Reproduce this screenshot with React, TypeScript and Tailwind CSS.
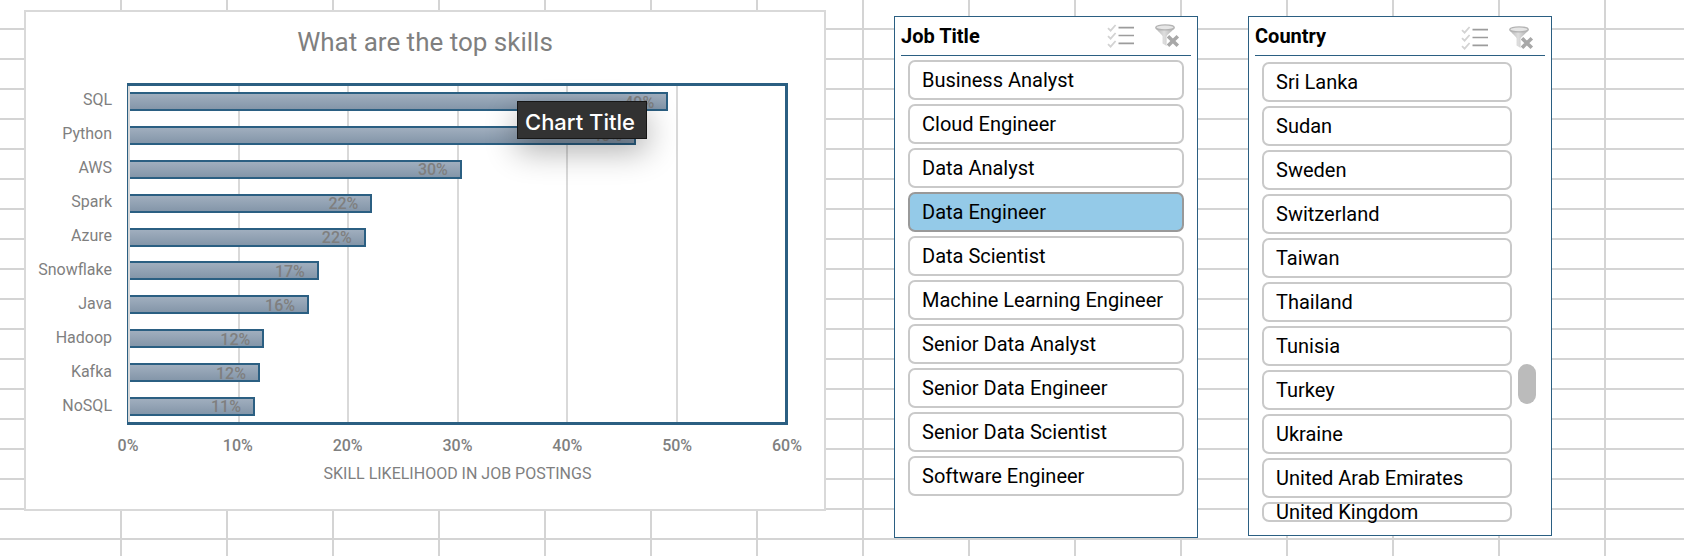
import { useState } from "react";

const skills = [
  { name: "SQL", value: 49.3, label: "49%" },
  { name: "Python", value: 46.35, label: "46%" },
  { name: "AWS", value: 30.4, label: "30%" },
  { name: "Spark", value: 22.2, label: "22%" },
  { name: "Azure", value: 21.6, label: "22%" },
  { name: "Snowflake", value: 17.3, label: "17%" },
  { name: "Java", value: 16.4, label: "16%" },
  { name: "Hadoop", value: 12.3, label: "12%" },
  { name: "Kafka", value: 11.9, label: "12%" },
  { name: "NoSQL", value: 11.45, label: "11%" },
];

const axisMax = 60;
const ticks = [0, 10, 20, 30, 40, 50, 60];

const jobTitles = [
  "Business Analyst",
  "Cloud Engineer",
  "Data Analyst",
  "Data Engineer",
  "Data Scientist",
  "Machine Learning Engineer",
  "Senior Data Analyst",
  "Senior Data Engineer",
  "Senior Data Scientist",
  "Software Engineer",
];

const countries = [
  "Sri Lanka",
  "Sudan",
  "Sweden",
  "Switzerland",
  "Taiwan",
  "Thailand",
  "Tunisia",
  "Turkey",
  "Ukraine",
  "United Arab Emirates",
];

function MultiSelectIcon() {
  return (
    <svg width="28" height="24" viewBox="0 0 28 24" fill="none" aria-hidden="true">
      <g stroke="#d3d3d3" strokeWidth="1.8">
        <path d="M1 4.2 3.6 6.6 8.6 1" />
        <path d="M1 12.2 3.6 14.6 8.6 9" />
        <path d="M1 20.2 3.6 22.6 8.6 17" />
      </g>
      <path d="M11.5 3.7H27M11.5 11.5H27M11.5 19.4H27" stroke="#9c9c9c" strokeWidth="1.7" />
    </svg>
  );
}

function ClearFilterIcon() {
  return (
    <svg width="25" height="24" viewBox="0 0 25 24" fill="none" aria-hidden="true">
      <defs>
        <linearGradient id="funnel" x1="0" x2="1" y1="0" y2="0">
          <stop offset="0" stopColor="#b4b4b4" />
          <stop offset="0.45" stopColor="#dedede" />
          <stop offset="1" stopColor="#acacac" />
        </linearGradient>
      </defs>
      <path
        d="M0.5 3.6C1 6 6 9.5 7.6 12.2V19.5L11.6 22V12.2C13.5 9.5 19 6 19.6 3.6Z"
        fill="url(#funnel)"
      />
      <ellipse cx="10" cy="3.4" rx="9.2" ry="2.5" fill="#e6e6e6" stroke="#b4b4b4" strokeWidth="1.4" />
      <path d="M13 12.2 22.8 21.8M22.8 12.2 13 21.8" stroke="#fff" strokeWidth="4.6" />
      <path d="M13 12.2 22.8 21.8M22.8 12.2 13 21.8" stroke="#a8a8a8" strokeWidth="3.6" />
    </svg>
  );
}

function SlicerHeader({ title, lowered = false }: { title: string; lowered?: boolean }) {
  return (
    <header className="mx-[6px] flex h-[39px] items-start justify-between border-b border-[#2b5f82]">
      <h2 className="pt-[7px] text-[20px] leading-6 font-bold text-black">{title}</h2>
      <div className={lowered ? "flex gap-5 pt-[9px] pr-[11px]" : "flex gap-5 pt-[7px] pr-[11px]"}>
        <button type="button" aria-label={"Multi-select " + title}>
          <MultiSelectIcon />
        </button>
        <button type="button" aria-label={"Clear filter " + title}>
          <ClearFilterIcon />
        </button>
      </div>
    </header>
  );
}

function SlicerItem({ label, selected, onClick }: { label: string; selected: boolean; onClick: () => void }) {
  return (
    <button
      type="button"
      aria-pressed={selected}
      onClick={onClick}
      className={
        selected
          ? "flex h-10 w-full items-center rounded-[7px] border-2 border-[#999999] bg-[#94cae8] px-3 text-[20px] leading-6 text-black"
          : "flex h-10 w-full items-center rounded-[7px] border-2 border-[#c9c9c9] bg-white px-3 text-[20px] leading-6 text-black"
      }
    >
      {label}
    </button>
  );
}

function SkillsChart() {
  return (
    <figure className="relative min-w-0 flex-1 border-2 border-[#d9d9d9] bg-white pb-[25px] text-[#7f7f7f]">
      <h1 className="pt-[14px] pb-[25px] text-center text-[26px] leading-8">What are the top skills</h1>

      <div className="grid grid-cols-[101px_1fr] pr-9">
        <ul className="flex h-[342px] flex-col justify-between pt-[7px] pr-[15px] pb-[9px] text-right text-[16px] leading-5">
          {skills.map((s) => (
            <li key={s.name}>{s.name}</li>
          ))}
        </ul>

        <div className="grid h-[342px] grid-cols-1 grid-rows-1 border-[3px] border-l border-[#2b5f82]">
          <div className="col-start-1 row-start-1 flex">
            {ticks.slice(1).map((t) => (
              <div key={t} className="flex-1 border-l-2 border-[#d9d9d9]" />
            ))}
          </div>
          <div className="col-start-1 row-start-1 ml-[2px] flex flex-col justify-between py-[6px]">
            {skills.map((s) => (
              <div
                key={s.name}
                className="flex h-[19px] items-center justify-end border-2 border-l-0 border-[#2b5f82] bg-linear-to-b from-[#a0aebe] to-[#8496a9] pt-[2px] pr-3 text-[16px] leading-4 font-medium"
                style={{ width: (s.value / axisMax) * 100 + "%" }}
              >
                {s.label}
              </div>
            ))}
          </div>
        </div>
      </div>

      <div className="mr-[37px] ml-[102px] flex justify-between pt-[11px] text-[16px] leading-5 font-medium">
        {ticks.map((t) => (
          <div key={t} className="flex w-0 justify-center">
            <span>{t}%</span>
          </div>
        ))}
      </div>
      <p className="mr-[37px] ml-[102px] pt-2 text-center text-[16px] leading-5">SKILL LIKELIHOOD IN JOB POSTINGS</p>

      <div
        role="tooltip"
        className="absolute top-[89px] left-[491px] flex h-[38px] w-[130px] items-center border border-[#161616] bg-[#323232] pt-1 pl-[7px] font-['Inter',sans-serif] text-[22px] leading-6 font-medium whitespace-nowrap text-white shadow-[0_12px_32px_rgba(0,0,0,0.32)]"
      >
        Chart Title
      </div>
    </figure>
  );
}

export default function App() {
  const [job, setJob] = useState("Data Engineer");
  const [country, setCountry] = useState("");

  return (
    <main className="relative min-h-screen overflow-hidden bg-white bg-[repeating-linear-gradient(to_bottom,transparent_0_28px,#d4d4d4_28px_30px)] font-['Roboto',sans-serif]">
      <div className="absolute inset-y-0 right-0 left-[120px] bg-[repeating-linear-gradient(to_right,#d4d4d4_0_2px,transparent_2px_106px)]" />

      <div className="relative flex items-start pt-[10px] pr-[132px] pl-6">
        <SkillsChart />

        <section className="mt-[6px] ml-[68px] w-[304px] shrink-0 border border-[#2b5f82] bg-white pb-[41px]">
          <SlicerHeader title="Job Title" />
          <div className="flex flex-col gap-1 px-[13px] pt-1">
            {jobTitles.map((j) => (
              <SlicerItem key={j} label={j} selected={j === job} onClick={() => setJob(j)} />
            ))}
          </div>
        </section>

        <section className="mt-[6px] ml-[50px] w-[304px] shrink-0 border border-[#2b5f82] bg-white pb-[13px]">
          <SlicerHeader title="Country" lowered />
          <div className="flex items-start gap-[6px] pt-[6px] pr-[15px] pl-[13px]">
            <div className="flex flex-1 flex-col gap-1">
              {countries.map((c) => (
                <SlicerItem key={c} label={c} selected={c === country} onClick={() => setCountry(c)} />
              ))}
              <button
                type="button"
                className="flex h-5 w-full items-center rounded-[7px] border-2 border-[#c9c9c9] bg-white px-3 text-[20px] leading-5 text-black"
              >
                United Kingdom
              </button>
            </div>
            <div className="mt-[302px] h-10 w-[18px] rounded-full bg-[#bbbbbb]" />
          </div>
        </section>
      </div>
    </main>
  );
}
